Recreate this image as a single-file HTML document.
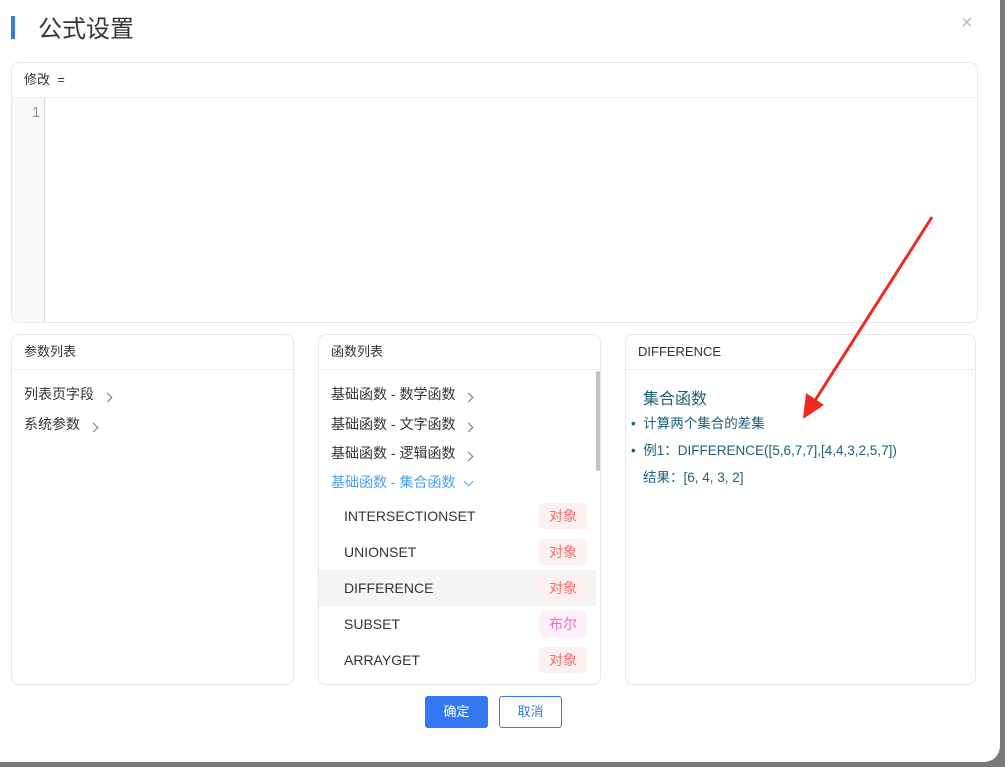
<!DOCTYPE html>
<html><head><meta charset="utf-8"><style>
*{box-sizing:border-box;margin:0;padding:0}
body{width:1005px;height:767px;background:#7a7a7a;position:relative;overflow:hidden;font-family:"Liberation Sans","Noto Sans CJK SC",sans-serif;color:#333}
.dlg{position:absolute;left:0;top:-20px;width:1000px;height:782px;background:#fff;border-radius:0 16px 16px 0}
.a{position:absolute}
.card{position:absolute;border:1px solid #e8e8e8;border-radius:8px;background:#fff}
.hd{height:35px;border-bottom:1px solid #ececec;font-size:13px;line-height:34px;padding-left:12px;color:#333}
.chev{display:inline-block;width:7px;height:7px;border-right:1px solid #777;border-top:1px solid #777;transform:rotate(45deg);margin-left:10px;position:relative;top:2px}
.item{position:absolute;font-size:14px}
.tag{position:absolute;right:9px;width:48px;height:26px;line-height:26px;text-align:center;border-radius:4px;font-size:14px;color:#f56c6c;background:#fef0f0}
.fn{position:absolute;left:0;width:277px;height:36px;font-size:14px;line-height:36px;padding-left:25px;color:#333}
.d{font-size:13.5px;color:#1f5f7a}
</style></head><body>
<div class="dlg"></div>
<div class="a" style="left:11px;top:16px;width:4px;height:23px;background:#3a78e0"></div>
<div class="a" style="left:38px;top:9px;font-size:24px;color:#333">公式设置</div>
<div class="a" style="left:961px;top:12px;font-size:20px;color:#bbb;font-weight:300">×</div>

<div class="card" style="left:11px;top:62px;width:967px;height:261px;overflow:hidden">
 <div class="hd" style="font-size:13px">修改 &nbsp;=</div>
 <div class="a" style="left:0;top:35px;width:33px;height:226px;background:#f9f9f9;border-right:1px solid #ddd"></div>
 <div class="a" style="left:20px;top:41px;font-size:15px;color:#999">1</div>
</div>

<div class="card" style="left:11px;top:334px;width:283px;height:351px">
 <div class="hd">参数列表</div>
 <div class="item" style="left:12px;top:49px">列表页字段<span class="chev"></span></div>
 <div class="item" style="left:12px;top:79px">系统参数<span class="chev"></span></div>
</div>

<div class="card" style="left:318px;top:334px;width:283px;height:351px;overflow:hidden">
 <div class="hd">函数列表</div>
 <div class="a" style="left:277px;top:36px;width:4px;height:100px;background:#c1c1c1;border-radius:2px"></div>
 <div class="item" style="left:12px;top:49px">基础函数 - 数学函数<span class="chev"></span></div>
 <div class="item" style="left:12px;top:79px">基础函数 - 文字函数<span class="chev"></span></div>
 <div class="item" style="left:12px;top:108px">基础函数 - 逻辑函数<span class="chev"></span></div>
 <div class="item" style="left:12px;top:137px;color:#4a9ff5">基础函数 - 集合函数<span class="chev" style="border-color:#4a9ff5;transform:rotate(135deg);top:-2px"></span></div>
 <div class="fn" style="top:163px">INTERSECTIONSET<span class="tag" style="top:5px">对象</span></div>
 <div class="fn" style="top:199px">UNIONSET<span class="tag" style="top:5px">对象</span></div>
 <div class="fn" style="top:235px;background:#f5f5f5">DIFFERENCE<span class="tag" style="top:5px">对象</span></div>
 <div class="fn" style="top:271px">SUBSET<span class="tag" style="top:5px;color:#e070c8;background:#fdf0fb">布尔</span></div>
 <div class="fn" style="top:307px">ARRAYGET<span class="tag" style="top:5px">对象</span></div>
</div>

<div class="card" style="left:625px;top:334px;width:351px;height:351px">
 <div class="hd">DIFFERENCE</div>
 <div class="a" style="left:17px;top:50px;font-size:16px;color:#1f5f7a">集合函数</div>
 <div class="a d" style="left:5px;top:77px">•&nbsp; 计算两个集合的差集</div>
 <div class="a d" style="left:5px;top:104px">•&nbsp; 例1：DIFFERENCE([5,6,7,7],[4,4,3,2,5,7])</div>
 <div class="a d" style="left:17px;top:131px">结果：[6, 4, 3, 2]</div>
</div>

<div class="a" style="left:425px;top:696px;width:63px;height:32px;background:#3478f6;border-radius:3px;color:#fff;font-size:13px;line-height:32px;text-align:center">确定</div>
<div class="a" style="left:499px;top:696px;width:63px;height:32px;border:1px solid #3a78e0;border-radius:3px;color:#3a78e0;font-size:13px;line-height:30px;text-align:center">取消</div>

<svg class="a" style="left:0;top:0" width="1005" height="767">
 <line x1="932" y1="217" x2="814" y2="402" stroke="#f02a1e" stroke-width="3"/>
 <polygon points="803,419 806,393 824,405" fill="#f02a1e"/>
</svg>
</body></html>
